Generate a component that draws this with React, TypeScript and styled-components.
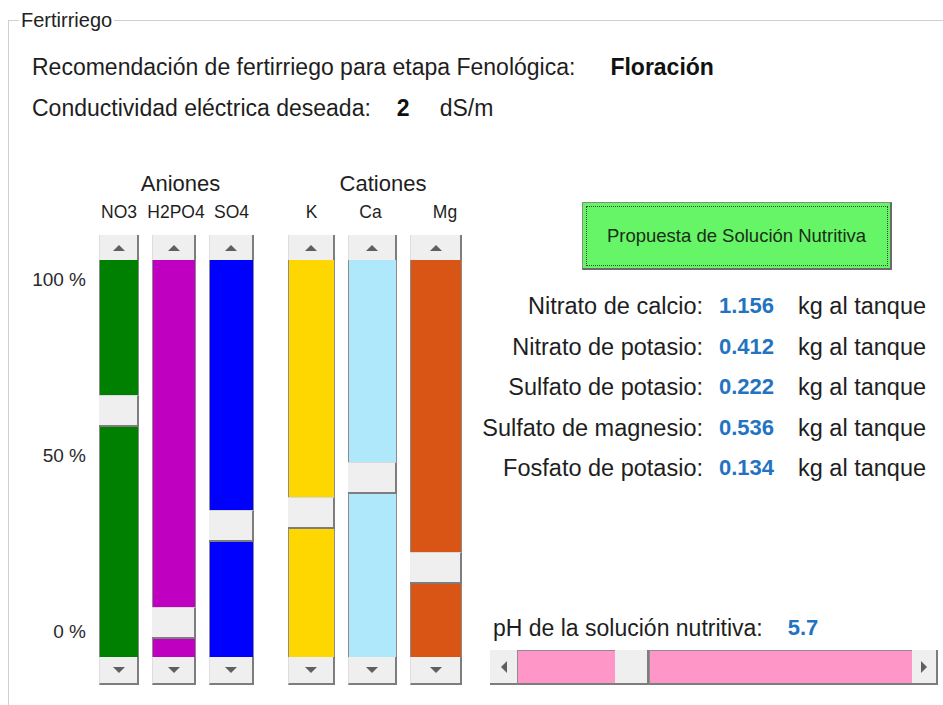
import React from "react";
import styled, { createGlobalStyle } from "styled-components";

const GlobalStyle = createGlobalStyle`
  html, body {
    margin: 0;
    padding: 0;
    background: #ffffff;
  }
  body {
    font-family: "Liberation Sans", Arial, sans-serif;
    color: #1e1e1e;
    overflow: hidden;
  }
`;

type Ion = { name: string; color: string; width: number; thumb: number; shift?: number };

const anions: Ion[] = [
  { name: "NO3", color: "#008000", width: 40, thumb: 135 },
  { name: "H2PO4", color: "#c000c0", width: 44, thumb: 347, shift: 2 },
  { name: "SO4", color: "#0000ff", width: 45, thumb: 250 },
];

const cations: Ion[] = [
  { name: "K", color: "#ffd700", width: 47, thumb: 237 },
  { name: "Ca", color: "#aee8fa", width: 49, thumb: 202, shift: -2 },
  { name: "Mg", color: "#d95516", width: 52, thumb: 292, shift: 9 },
];

const results = [
  { label: "Nitrato de calcio:", value: "1.156" },
  { label: "Nitrato de potasio:", value: "0.412" },
  { label: "Sulfato de potasio:", value: "0.222" },
  { label: "Sulfato de magnesio:", value: "0.536" },
  { label: "Fosfato de potasio:", value: "0.134" },
];

const Arrow: React.FC<{ dir: "up" | "down" | "left" | "right" }> = ({ dir }) => {
  const pts = {
    up: "0,6 6,0 12,6",
    down: "0,0 12,0 6,6",
    left: "6,0 6,12 0,6",
    right: "0,0 0,12 6,6",
  }[dir];
  const horiz = dir === "left" || dir === "right";
  return (
    <svg width={horiz ? 6 : 12} height={horiz ? 12 : 6} viewBox={horiz ? "0 0 6 12" : "0 0 12 6"}>
      <polygon points={pts} fill="#5f5f5f" />
    </svg>
  );
};

const VScrollBar: React.FC<{ color: string; thumb: number }> = ({ color, thumb }) => (
  <VScroll>
    <ArrowBtn>
      <Arrow dir="up" />
    </ArrowBtn>
    <Track>
      <Fill $color={color} style={{ height: thumb }} />
      <Thumb />
      <Fill $color={color} $grow />
    </Track>
    <ArrowBtn $down>
      <Arrow dir="down" />
    </ArrowBtn>
  </VScroll>
);

const Group: React.FC<{ title: string; items: Ion[]; titleShift: number }> = ({
  title,
  items,
  titleShift,
}) => (
  <GroupBox>
    <GroupTitle $shift={titleShift}>{title}</GroupTitle>
    <BarRow>
      {items.map((it) => (
        <BarCol key={it.name} $w={it.width}>
          <BarLabel $shift={it.shift ?? 0}>{it.name}</BarLabel>
          <VScrollBar color={it.color} thumb={it.thumb} />
        </BarCol>
      ))}
    </BarRow>
  </GroupBox>
);

export default function App() {
  return (
    <>
      <GlobalStyle />
      <Frame>
        <Legend>Fertirriego</Legend>
        <Content>
          <InfoRow>
            <span>Recomendación de fertirriego para etapa Fenológica:</span>
            <Strong $gap={35}>Floración</Strong>
          </InfoRow>
          <InfoRow $second>
            <span>Conductividad eléctrica deseada:</span>
            <Strong $gap={26}>2</Strong>
            <Unit>dS/m</Unit>
          </InfoRow>
          <Main>
            <LeftPanel>
              <PercentCol>
                <span>100 %</span>
                <span>50 %</span>
                <span>0 %</span>
              </PercentCol>
              <Group title="Aniones" items={anions} titleShift={4} />
              <Group title="Cationes" items={cations} titleShift={8} />
            </LeftPanel>
            <RightPanel>
              <ProposalButton>Propuesta de Solución Nutritiva</ProposalButton>
              <Results>
                {results.map((r) => (
                  <React.Fragment key={r.label}>
                    <ResLabel>{r.label}</ResLabel>
                    <ResValue>{r.value}</ResValue>
                    <ResUnit>kg al tanque</ResUnit>
                  </React.Fragment>
                ))}
              </Results>
              <PhBlock>
                <PhRow>
                  <span>pH de la solución nutritiva:</span>
                  <PhValue>5.7</PhValue>
                </PhRow>
                <HScroll>
                  <HArrowBtn $right={false}>
                    <Arrow dir="left" />
                  </HArrowBtn>
                  <HTrack>
                    <HFill style={{ width: 97 }} />
                    <HThumb />
                    <HFill $grow />
                  </HTrack>
                  <HArrowBtn $right>
                    <Arrow dir="right" />
                  </HArrowBtn>
                </HScroll>
              </PhBlock>
            </RightPanel>
          </Main>
        </Content>
      </Frame>
    </>
  );
}

const Frame = styled.fieldset`
  box-sizing: border-box;
  margin: 10px 0 0 8px;
  padding: 0;
  height: calc(100vh - 10px);
  border: 1px solid #cfcfcf;
  border-right: none;
  border-bottom: none;
`;

const Legend = styled.legend`
  margin-left: 10px;
  padding: 0 2px;
  font-size: 20px;
  line-height: 21px;
  color: #222;
`;

const Content = styled.div`
  padding-left: 23px;
`;

const InfoRow = styled.div<{ $second?: boolean }>`
  display: flex;
  align-items: baseline;
  font-size: 23px;
  line-height: 28px;
  margin-top: ${(p) => (p.$second ? "13px" : "22px")};
  white-space: nowrap;
`;

const Strong = styled.span<{ $gap: number }>`
  font-weight: bold;
  margin-left: ${(p) => p.$gap}px;
  color: #111;
`;

const Unit = styled.span`
  margin-left: 30px;
`;

const Main = styled.div`
  display: flex;
  margin-top: 50px;
`;

const LeftPanel = styled.div`
  display: flex;
  align-items: flex-end;
  box-sizing: border-box;
  padding-left: 8px;
  width: 448px;
`;

const PercentCol = styled.div`
  width: 46px;
  height: 450px;
  box-sizing: border-box;
  padding: 35px 0 43px;
  margin-right: 13px;
  display: flex;
  flex-direction: column;
  justify-content: space-between;
  align-items: flex-end;
  font-size: 19px;
  line-height: 20px;
  color: #2a2a2a;
  white-space: nowrap;
`;

const GroupBox = styled.div`
  display: flex;
  flex-direction: column;
  align-items: center;
  & + & {
    margin-left: 34px;
  }
`;

const GroupTitle = styled.div<{ $shift: number }>`
  font-size: 22px;
  line-height: 24px;
  margin-bottom: 6px;
  white-space: nowrap;
  transform: translateX(${(p) => p.$shift}px);
`;

const BarRow = styled.div`
  display: flex;
  gap: 13px;
`;

const BarCol = styled.div<{ $w: number }>`
  width: ${(p) => p.$w}px;
  display: flex;
  flex-direction: column;
  align-items: center;
`;

const BarLabel = styled.div<{ $shift: number }>`
  font-size: 17.5px;
  line-height: 20px;
  margin-bottom: 13px;
  white-space: nowrap;
  transform: translateX(${(p) => p.$shift}px);
`;

const VScroll = styled.div`
  align-self: stretch;
  height: 450px;
  display: flex;
  flex-direction: column;
`;

const ArrowBtn = styled.div<{ $down?: boolean }>`
  height: ${(p) => (p.$down ? "28px" : "25px")};
  box-sizing: border-box;
  background: #efefef;
  display: flex;
  align-items: center;
  justify-content: center;
  border-right: 2px solid #7d7d7d;
  border-bottom: ${(p) => (p.$down ? "2px solid #7d7d7d" : "none")};
  border-left: 1px solid #dedede;
`;

const Track = styled.div`
  flex: 1;
  display: flex;
  flex-direction: column;
`;

const Fill = styled.div<{ $color: string; $grow?: boolean }>`
  background: ${(p) => p.$color};
  border-left: 1px solid #8c8c8c;
  border-right: 1px solid #8c8c8c;
  flex: ${(p) => (p.$grow ? 1 : "none")};
`;

const Thumb = styled.div`
  height: 32px;
  box-sizing: border-box;
  background: #efefef;
  border-right: 2px solid #7d7d7d;
  border-bottom: 2px solid #7d7d7d;
  border-top: 1px solid #d8d8d8;
`;

const RightPanel = styled.div`
  display: flex;
  flex-direction: column;
  padding-top: 30px;
`;

const ProposalButton = styled.button`
  align-self: flex-start;
  margin-left: 102px;
  width: 310px;
  height: 68px;
  background: #66f566;
  border: 1px solid #8a8a8a;
  border-right: 2px solid #6a6a6a;
  border-bottom: 2px solid #6a6a6a;
  outline: 1px dotted #2a4a2a;
  outline-offset: -5px;
  font-family: "Liberation Sans", Arial, sans-serif;
  font-size: 18.5px;
  color: #1a2e1a;
  padding: 0;
`;

const Results = styled.div`
  display: grid;
  grid-template-columns: 239px 79px auto;
  margin-top: 16px;
  font-size: 23.5px;
  line-height: 40.5px;
  white-space: nowrap;
`;

const ResLabel = styled.div`
  text-align: right;
  padding-right: 16px;
`;

const ResValue = styled.div`
  font-weight: bold;
  font-size: 22px;
  color: #2373c0;
`;

const ResUnit = styled.div``;

const PhBlock = styled.div`
  margin-top: auto;
  padding-left: 10px;
`;

const PhRow = styled.div`
  display: flex;
  padding-left: 3px;
  font-size: 23px;
  line-height: 28px;
  margin-bottom: 8px;
  white-space: nowrap;
`;

const PhValue = styled.span`
  margin-left: 25px;
  font-weight: bold;
  font-size: 22px;
  color: #2373c0;
`;

const HScroll = styled.div`
  width: 448px;
  height: 35px;
  display: flex;
`;

const HArrowBtn = styled.div<{ $right: boolean }>`
  width: ${(p) => (p.$right ? "26px" : "27px")};
  box-sizing: border-box;
  background: #efefef;
  display: flex;
  align-items: center;
  justify-content: center;
  border-bottom: 2px solid #7d7d7d;
  border-right: ${(p) => (p.$right ? "2px solid #7d7d7d" : "none")};
`;

const HTrack = styled.div`
  flex: 1;
  display: flex;
`;

const HFill = styled.div<{ $grow?: boolean }>`
  background: #ff96c8;
  border-top: 1px solid #8c8c8c;
  border-left: 1px solid #8c8c8c;
  border-bottom: 2px solid #7d7d7d;
  flex: ${(p) => (p.$grow ? 1 : "none")};
`;

const HThumb = styled.div`
  width: 34px;
  box-sizing: border-box;
  background: #efefef;
  border-bottom: 2px solid #7d7d7d;
  border-right: 2px solid #7d7d7d;
`;
